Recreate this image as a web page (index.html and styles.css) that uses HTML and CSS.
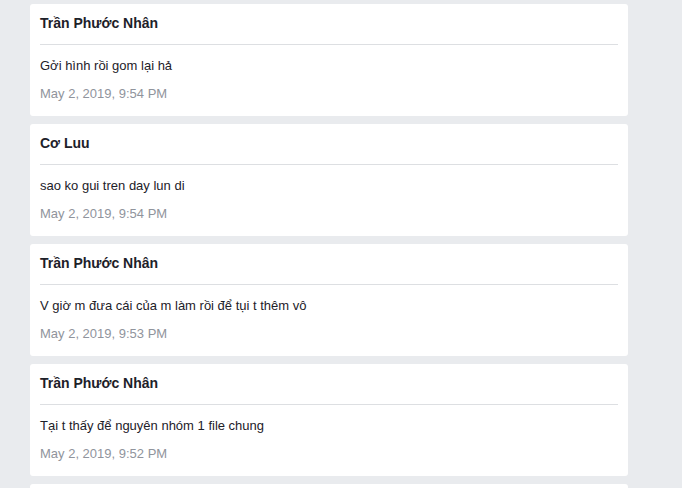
FILE: index.html
```html
<!DOCTYPE html>
<html>
<head>
<meta charset="utf-8">
<link rel="stylesheet" href="styles.css">
</head>
<body>
<div class="list">
  <div class="card">
    <div class="name">Trần Phước Nhân</div>
    <div class="msg">Gởi hình rồi gom lại hả</div>
    <div class="date">May 2, 2019, 9:54 PM</div>
  </div>
  <div class="card">
    <div class="name">Cơ Luu</div>
    <div class="msg">sao ko gui tren day lun di</div>
    <div class="date">May 2, 2019, 9:54 PM</div>
  </div>
  <div class="card">
    <div class="name">Trần Phước Nhân</div>
    <div class="msg">V giờ m đưa cái của m làm rồi để tụi t thêm vô</div>
    <div class="date">May 2, 2019, 9:53 PM</div>
  </div>
  <div class="card">
    <div class="name">Trần Phước Nhân</div>
    <div class="msg">Tại t thấy để nguyên nhóm 1 file chung</div>
    <div class="date">May 2, 2019, 9:52 PM</div>
  </div>
  <div class="card"></div>
</div>
</body>
</html>
```

FILE: styles.css
```css
html, body {
  margin: 0;
  padding: 0;
  background: #e9ebee;
  overflow: hidden;
}
body {
  font-family: "Liberation Sans", Arial, sans-serif;
  font-size: 13px;
  color: #1d2129;
}
.list {
  display: flex;
  flex-direction: column;
  gap: 8px;
  width: 598px;
  margin-left: 30px;
  padding-top: 4px;
}
.card {
  background: #fff;
  border-radius: 3px;
  padding: 11px 10px 14px;
  height: 112px;
  box-sizing: border-box;
}
.name {
  font-weight: bold;
  font-size: 14px;
  line-height: 16px;
  padding-bottom: 13px;
  border-bottom: 1px solid #dddfe2;
}
.msg {
  line-height: 16px;
  margin-top: 13px;
}
.date {
  line-height: 16px;
  margin-top: 12px;
  color: #90949c;
}
```
